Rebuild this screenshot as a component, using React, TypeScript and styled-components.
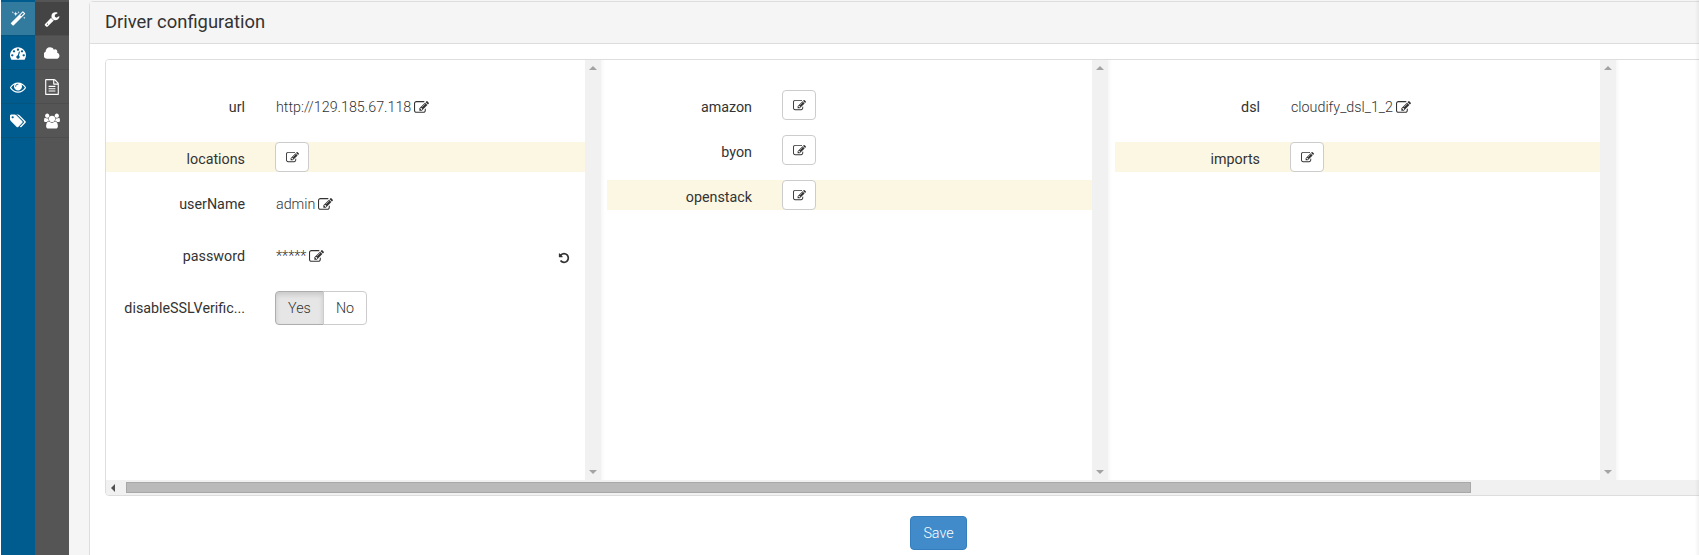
import React from "react";
import styled, { createGlobalStyle } from "styled-components";

const GlobalStyle = createGlobalStyle`
  html, body {
    margin: 0;
    padding: 0;
    height: 100%;
    overflow: hidden;
    background: #fff;
    font-family: Roboto, "Liberation Sans", sans-serif;
    font-size: 14px;
    color: #333;
  }
`;

const Page = styled.div`
  position: relative;
  display: flex;
  width: 1699px;
  height: 555px;
  overflow: hidden;
  background: #f5f5f5;

  &::after {
    content: "";
    position: absolute;
    top: 0;
    right: 0;
    bottom: 0;
    width: 4px;
    background: linear-gradient(90deg, rgba(0, 0, 0, 0), rgba(0, 0, 0, 0.05));
  }
`;

const Rail = styled.nav<{ $dark?: boolean }>`
  flex: none;
  width: ${(p) => (p.$dark ? "34px" : "35px")};
  padding-top: 2px;
  border-left: ${(p) => (p.$dark ? "0" : "1px solid #fff")};
  box-sizing: border-box;
  background: ${(p) => (p.$dark ? "#555" : "#005c8f")};
`;

const RailItem = styled.div<{ $dark?: boolean; $active?: boolean }>`
  display: flex;
  align-items: center;
  justify-content: center;
  height: 34px;
  color: #fff;
  font-size: 16px;
  border-bottom: 1px solid ${(p) => (p.$dark ? "#4e4e4e" : "#05557f")};
  box-sizing: border-box;
  background: ${(p) =>
    p.$active ? (p.$dark ? "#444" : "#337a9f") : "transparent"};
`;

const Main = styled.main`
  flex: 1;
  min-width: 0;
  padding: 1px 0 0 20px;
`;

const Panel = styled.section`
  width: 1720px;
  height: 560px;
  background: #fff;
  border: 1px solid #ddd;
  border-radius: 4px 0 0 0;
  box-sizing: border-box;
`;

const PanelHeading = styled.header`
  height: 42px;
  padding: 0 15px 2px;
  display: flex;
  align-items: center;
  font-size: 18.4px;
  color: #333;
  background: #f5f5f5;
  border-bottom: 1px solid #ddd;
  box-sizing: border-box;
`;

const PanelBody = styled.div`
  padding: 15px 0 0 15px;
`;

const Grid = styled.div`
  width: 1700px;
  border: 1px solid #ddd;
  border-radius: 4px;
  overflow: hidden;
  box-sizing: border-box;
`;

const Columns = styled.div`
  display: flex;
  height: 420px;
`;

const Column = styled.div<{ $width: number }>`
  flex: none;
  width: ${(p) => p.$width}px;
  display: flex;
`;

const ColumnBody = styled.div<{ $inset: number }>`
  flex: 1;
  min-width: 0;
  padding-left: ${(p) => p.$inset}px;
  background: ${(p) =>
    p.$inset ? "linear-gradient(90deg, #f7f7f7, #fff 4px)" : "#fff"};
`;

const VScroll = styled.div`
  flex: none;
  width: 16px;
  position: relative;
  background: #f1f1f1;
`;

const Arrow = styled.span<{ $dir: "up" | "down" | "left" }>`
  position: absolute;
  width: 0;
  height: 0;
  ${(p) =>
    p.$dir === "up" &&
    "top: 6px; left: 4px; border: 4px solid transparent; border-top: 0; border-bottom: 4px solid #a3a3a3;"}
  ${(p) =>
    p.$dir === "down" &&
    "bottom: 6px; left: 4px; border: 4px solid transparent; border-bottom: 0; border-top: 4px solid #a3a3a3;"}
  ${(p) =>
    p.$dir === "left" &&
    "left: 5px; top: 4px; border: 4px solid transparent; border-left: 0; border-right: 4px solid #505050;"}
`;

const Rows = styled.div<{ $top: number }>`
  padding-top: ${(p) => p.$top}px;
`;

const Row = styled.div<{ $gap?: number; $tall?: boolean; $flagged?: boolean }>`
  display: flex;
  align-items: center;
  height: ${(p) => (p.$tall ? 34 : 30)}px;
  margin-bottom: ${(p) => p.$gap ?? 0}px;
  background: ${(p) => (p.$flagged ? "#fcf7e3" : "transparent")};
`;

const Label = styled.label<{ $width: number; $lowered?: boolean }>`
  flex: none;
  width: ${(p) => p.$width}px;
  padding-top: ${(p) => (p.$lowered ? 4 : 0)}px;
  text-align: right;
  font-size: 14.3px;
  color: #333;
`;

const Field = styled.div`
  flex: 1;
  display: flex;
  align-items: center;
  padding-left: 30px;
  min-width: 0;
`;

const Value = styled.span`
  margin-left: 1px;
  font-size: 14.3px;
  font-weight: 300;
  color: #333;
`;

const Icon = styled.svg<{ $size: number }>`
  flex: none;
  display: block;
  width: ${(p) => p.$size}px;
  height: ${(p) => p.$size}px;
  fill: currentColor;
`;

const EditLink = styled.span`
  display: inline-flex;
  margin-left: 3px;
  color: #333;
`;

const EditButton = styled.button`
  display: flex;
  align-items: center;
  justify-content: center;
  width: 34px;
  height: 30px;
  padding: 0;
  background: #fff;
  border: 1px solid #ccc;
  border-radius: 4px;
  color: #333;
`;

const ResetIcon = styled.span`
  margin: 4px 15px 0 auto;
  display: inline-flex;
  color: #333;
`;

const Toggle = styled.div`
  display: flex;
`;

const ToggleOption = styled.button<{ $on?: boolean }>`
  width: ${(p) => (p.$on ? 49 : 44)}px;
  height: 34px;
  padding: 0;
  font: 300 14.3px Roboto, sans-serif;
  color: #333;
  background: ${(p) => (p.$on ? "#e6e6e6" : "#fff")};
  border: 1px solid ${(p) => (p.$on ? "#adadad" : "#ccc")};
  border-radius: ${(p) => (p.$on ? "4px 0 0 4px" : "0 4px 4px 0")};
  margin-left: ${(p) => (p.$on ? "0" : "-1px")};
  box-shadow: ${(p) => (p.$on ? "inset 0 3px 5px rgba(0,0,0,.125)" : "none")};
`;

const HScroll = styled.div`
  display: flex;
  position: relative;
  height: 15px;
  background: #f1f1f1;
`;

const Thumb = styled.div`
  margin-left: 20px;
  width: 1345px;
  height: 11px;
  margin-top: 2px;
  background: #bababa;
  border: 1px solid #a8a8a8;
  box-sizing: border-box;
`;

const Footer = styled.div`
  display: flex;
  justify-content: center;
  padding-top: 20px;
  width: 1667px;
`;

const SaveButton = styled.button`
  width: 57px;
  height: 34px;
  padding: 0;
  background: #428bca;
  border: 1px solid #357ebd;
  border-radius: 4px;
  color: #fff;
  font: 300 14.3px Roboto, sans-serif;
`;

const paths = {
  magic:
    "M1254 581l293-293-107-107-293 293zm447-293q0 27-18 45l-1286 1286q-18 18-45 18t-45-18l-198-198q-18-18-18-45t18-45l1286-1286q18-18 45-18t45 18l198 198q18 18 18 45zm-1351-190l98 30-98 30-30 98-30-98-98-30 98-30 30-98zm350 162l196 60-196 60-60 196-60-196-196-60 196-60 60-196zm930 478l98 30-98 30-30 98-30-98-98-30 98-30 30-98zm-640-640l98 30-98 30-30 98-30-98-98-30 98-30 30-98z",
  dashboard:
    "M384 1152q0-53-37.5-90.5t-90.5-37.5-90.5 37.5-37.5 90.5 37.5 90.5 90.5 37.5 90.5-37.5 37.5-90.5zm192-448q0-53-37.5-90.5t-90.5-37.5-90.5 37.5-37.5 90.5 37.5 90.5 90.5 37.5 90.5-37.5 37.5-90.5zm428 481l101-382q6-26-7.5-48.5t-38.5-29.5-48 6.5-30 39.5l-101 382q-60 5-107 43.5t-63 98.5q-20 77 20 146t117 89 146-20 89-117q16-60-6-117t-72-91zm660-33q0-53-37.5-90.5t-90.5-37.5-90.5 37.5-37.5 90.5 37.5 90.5 90.5 37.5 90.5-37.5 37.5-90.5zm-640-640q0-53-37.5-90.5t-90.5-37.5-90.5 37.5-37.5 90.5 37.5 90.5 90.5 37.5 90.5-37.5 37.5-90.5zm448 192q0-53-37.5-90.5t-90.5-37.5-90.5 37.5-37.5 90.5 37.5 90.5 90.5 37.5 90.5-37.5 37.5-90.5zm320 448q0 261-141 483-19 29-54 29h-1402q-35 0-54-29-141-221-141-483 0-182 71-348t191-286 286-191 348-71 348 71 286 191 191 286 71 348z",
  eye:
    "M1664 960q-152-236-381-353 61 104 61 225 0 185-131.5 316.5t-316.5 131.5-316.5-131.5-131.5-316.5q0-121 61-225-229 117-381 353 133 205 333.5 326.5t434.5 121.5 434.5-121.5 333.5-326.5zm-720-384q0-20-14-34t-34-14q-125 0-214.5 89.5t-89.5 214.5q0 20 14 34t34 14 34-14 14-34q0-86 61-147t147-61q20 0 34-14t14-34zm848 384q0 34-20 69-140 230-376.5 368.5t-499.5 138.5-499.5-139-376.5-368q-20-35-20-69t20-69q140-229 376.5-368t499.5-139 499.5 139 376.5 368q20 35 20 69z",
  tags:
    "M448 448q0-53-37.5-90.5t-90.5-37.5-90.5 37.5-37.5 90.5 37.5 90.5 90.5 37.5 90.5-37.5 37.5-90.5zm1067 576q0 53-37 90l-491 492q-39 37-91 37-53 0-90-37l-715-716q-38-37-64.5-101t-26.5-117v-416q0-52 38-90t90-38h416q53 0 117 26.5t102 64.5l715 714q37 39 37 91zm384 0q0 53-37 90l-491 492q-39 37-91 37-36 0-59-14t-53-45l470-470q37-37 37-90 0-52-37-91l-715-714q-38-38-102-64.5t-117-26.5h224q53 0 117 26.5t102 64.5l715 714q37 39 37 91z",
  wrench:
    "M448 1472q0-26-19-45t-45-19-45 19-19 45 19 45 45 19 45-19 19-45zm644-420l-682 682q-37 37-90 37-52 0-91-37l-106-108q-38-36-38-90 0-53 38-91l681-681q39 98 114.5 173.5t173.5 114.5zm634-435q0 39-23 106-47 134-164.5 217.5t-258.5 83.5q-185 0-316.5-131.5t-131.5-316.5 131.5-316.5 316.5-131.5q58 0 121.5 16.5t107.5 46.5q16 11 16 28t-16 28l-293 169v224l193 107q5-3 79-48.5t135.5-81 70.5-35.5q15 0 23.5 10t8.5 25z",
  cloud:
    "M1856 1216q0 159-112.5 271.5t-271.5 112.5h-1088q-185 0-316.5-131.5t-131.5-316.5q0-132 71-241.5t187-163.5q-2-28-2-43 0-212 150-362t362-150q158 0 286.5 88t187.5 230q70-62 166-62 106 0 181 75t75 181q0 75-41 138 129 30 213 134.5t84 239.5z",
  file:
    "M1596 380q28 28 48 76t20 88v1152q0 40-28 68t-68 28h-1344q-40 0-68-28t-28-68v-1600q0-40 28-68t68-28h896q40 0 88 20t76 48zm-444-244v376h376q-10-29-22-41l-313-313q-12-12-41-22zm384 1528v-1024h-416q-40 0-68-28t-28-68v-416h-768v1536h1280zm-1024-864q0-14 9-23t23-9h704q14 0 23 9t9 23v64q0 14-9 23t-23 9h-704q-14 0-23-9t-9-23v-64zm736 224q14 0 23 9t9 23v64q0 14-9 23t-23 9h-704q-14 0-23-9t-9-23v-64q0-14 9-23t23-9h704zm0 256q14 0 23 9t9 23v64q0 14-9 23t-23 9h-704q-14 0-23-9t-9-23v-64q0-14 9-23t23-9h704z",
  users:
    "M593 896q-162 5-265 128h-134q-82 0-138-40.5t-56-118.5q0-353 124-353 6 0 43.5 21t97.5 42.5 119 21.5q67 0 133-23-5 37-5 66 0 139 81 256zm1071 637q0 120-73 189.5t-194 69.5h-874q-121 0-194-69.5t-73-189.5q0-53 3.5-103.5t14-109 26.5-108.5 43-97.5 62-81 85.5-53.5 111.5-20q10 0 43 21.5t73 48 107 48 135 21.5 135-21.5 107-48 73-48 43-21.5q61 0 111.5 20t85.5 53.5 62 81 43 97.5 26.5 108.5 14 109 3.5 103.5zm-1024-1277q0 106-75 181t-181 75-181-75-75-181 75-181 181-75 181 75 75 181zm704 384q0 159-112.5 271.5t-271.5 112.5-271.5-112.5-112.5-271.5 112.5-271.5 271.5-112.5 271.5 112.5 112.5 271.5zm576 225q0 78-56 118.5t-138 40.5h-134q-103-123-265-128 81-117 81-256 0-29-5-66 66 23 133 23 59 0 119-21.5t97.5-42.5 43.5-21q124 0 124 353zm-128-609q0 106-75 181t-181 75-181-75-75-181 75-181 181-75 181 75 75 181z",
  edit:
    "M888 1184l116-116-152-152-116 116v56h96v96h56zm440-720q-16-16-33 1l-350 350q-17 17-1 33t33-1l350-350q17-17 1-33zm80 594v190q0 119-84.5 203.5t-203.5 84.5h-832q-119 0-203.5-84.5t-84.5-203.5v-832q0-119 84.5-203.5t203.5-84.5h832q63 0 117 25 15 7 18 23 3 17-9 29l-49 49q-14 14-32 8-23-6-45-6h-832q-66 0-113 47t-47 113v832q0 66 47 113t113 47h832q66 0 113-47t47-113v-126q0-13 9-22l64-64q15-15 35-7t20 29zm-96-738l288 288-672 672h-288v-288zm444 132l-92 92-288-288 92-92q28-28 68-28t68 28l152 152q28 28 28 68t-28 68z",
  undo:
    "M1664 896q0 156-61 298t-164 245-245 164-298 61q-172 0-327-72.5t-264-204.5q-7-10-6.5-22.5t8.5-20.5l137-138q10-9 25-9 16 2 23 12 73 95 179 147t225 52q104 0 198.5-40.5t163.5-109.5 109.5-163.5 40.5-198.5-40.5-198.5-109.5-163.5-163.5-109.5-198.5-40.5q-98 0-188 35.5t-160 101.5l137 138q31 30 14 69-17 40-59 40h-448q-26 0-45-19t-19-45v-448q0-42 40-59 39-17 69 14l130 129q107-101 244.5-156.5t284.5-55.5q156 0 298 61t245 164 164 245 61 298z",
};

const Glyph = ({ name, size = 16 }: { name: keyof typeof paths; size?: number }) => (
  <Icon $size={size} viewBox={name === "tags" || name === "cloud" || name === "users" ? "0 0 1920 1792" : "0 0 1792 1792"}>
    <path d={paths[name]} />
  </Icon>
);

const Edit = () => (
  <EditLink>
    <Glyph name="edit" size={15} />
  </EditLink>
);

const EditBtn = () => (
  <EditButton>
    <Glyph name="edit" size={13} />
  </EditButton>
);

const Scrollbar = () => (
  <VScroll>
    <Arrow $dir="up" />
    <Arrow $dir="down" />
  </VScroll>
);

const primary: (keyof typeof paths)[] = ["magic", "dashboard", "eye", "tags"];
const secondary: (keyof typeof paths)[] = ["wrench", "cloud", "file", "users"];

const App = () => (
  <>
    <GlobalStyle />
    <Page>
      <Rail>
        {primary.map((name, i) => (
          <RailItem key={name} $active={i === 0}>
            <Glyph name={name} />
          </RailItem>
        ))}
      </Rail>
      <Rail $dark>
        {secondary.map((name, i) => (
          <RailItem key={name} $dark $active={i === 0}>
            <Glyph name={name} />
          </RailItem>
        ))}
      </Rail>
      <Main>
        <Panel>
          <PanelHeading>Driver configuration</PanelHeading>
          <PanelBody>
            <Grid>
              <Columns>
                <Column $width={495}>
                  <ColumnBody $inset={0}>
                    <Rows $top={32}>
                      <Row $gap={20}>
                        <Label $width={139}>url</Label>
                        <Field>
                          <Value>http://129.185.67.118</Value>
                          <Edit />
                        </Field>
                      </Row>
                      <Row $gap={17} $flagged>
                        <Label $width={139} $lowered>
                          locations
                        </Label>
                        <Field>
                          <EditBtn />
                        </Field>
                      </Row>
                      <Row $gap={22}>
                        <Label $width={139}>userName</Label>
                        <Field>
                          <Value>admin</Value>
                          <Edit />
                        </Field>
                      </Row>
                      <Row $gap={20}>
                        <Label $width={139}>password</Label>
                        <Field>
                          <Value>*****</Value>
                          <Edit />
                          <ResetIcon>
                            <Glyph name="undo" size={12} />
                          </ResetIcon>
                        </Field>
                      </Row>
                      <Row $tall>
                        <Label $width={139}>disableSSLVerific...</Label>
                        <Field>
                          <Toggle>
                            <ToggleOption $on>Yes</ToggleOption>
                            <ToggleOption>No</ToggleOption>
                          </Toggle>
                        </Field>
                      </Row>
                    </Rows>
                  </ColumnBody>
                  <Scrollbar />
                </Column>
                <Column $width={507}>
                  <ColumnBody $inset={6}>
                    <Rows $top={30}>
                      <Row $gap={15}>
                        <Label $width={145} $lowered>
                          amazon
                        </Label>
                        <Field>
                          <EditBtn />
                        </Field>
                      </Row>
                      <Row $gap={15}>
                        <Label $width={145} $lowered>
                          byon
                        </Label>
                        <Field>
                          <EditBtn />
                        </Field>
                      </Row>
                      <Row $flagged>
                        <Label $width={145} $lowered>
                          openstack
                        </Label>
                        <Field>
                          <EditBtn />
                        </Field>
                      </Row>
                    </Rows>
                  </ColumnBody>
                  <Scrollbar />
                </Column>
                <Column $width={508}>
                  <ColumnBody $inset={7}>
                    <Rows $top={32}>
                      <Row $gap={20}>
                        <Label $width={145}>dsl</Label>
                        <Field>
                          <Value>cloudify_dsl_1_2</Value>
                          <Edit />
                        </Field>
                      </Row>
                      <Row $flagged>
                        <Label $width={145} $lowered>
                          imports
                        </Label>
                        <Field>
                          <EditBtn />
                        </Field>
                      </Row>
                    </Rows>
                  </ColumnBody>
                  <Scrollbar />
                </Column>
                <ColumnBody $inset={6} />
              </Columns>
              <HScroll>
                <Arrow $dir="left" />
                <Thumb />
              </HScroll>
            </Grid>
            <Footer>
              <SaveButton>Save</SaveButton>
            </Footer>
          </PanelBody>
        </Panel>
      </Main>
    </Page>
  </>
);

export default App;
